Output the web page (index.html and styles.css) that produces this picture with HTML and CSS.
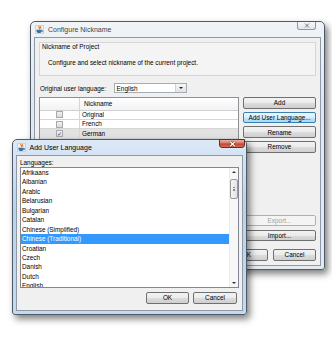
FILE: index.html
```html
<!DOCTYPE html>
<html lang="en">
<head>
    <meta charset="UTF-8">
    <title>Configure Nickname</title>
    <link rel="stylesheet" href="styles.css">
</head>
<body>
    <!-- back window: Configure Nickname (inactive) -->
    <div class="window window-back">
        <div class="titlebar">
            <svg class="app-icon" width="9" height="9" viewBox="0 0 16 16">
                <rect x="0.5" y="0.5" width="15" height="15" rx="1" fill="#eef1f4" stroke="#a9b0b8"/>
                <path d="M7.5 1.5c-2.5 2.2 2.2 3.2 0 6M10 2.5c-1.4 1.3 1.3 2.2 0 4" stroke="#e2660a" fill="none" stroke-width="1.8"/>
                <path d="M2.5 8.5h9.5v1.6c0 2.8-2.2 4.2-4.8 4.2S2.5 12.9 2.5 10.1z" fill="#3f6f9a"/>
                <path d="M12 9.6h1.6v2.2H11.4" stroke="#3f6f9a" fill="none" stroke-width="1.3"/>
            </svg>
            <span class="title">Configure Nickname</span>
            <div class="close close-inactive">
                <svg width="6" height="5" viewBox="0 0 6 5"><path d="M1 0.5l4 4M5 0.5l-4 4" stroke="#6d7782" stroke-width="1"/></svg>
            </div>
        </div>
        <div class="client client-back">
            <div class="group">
                <div class="group-title">Nickname of Project</div>
                <div class="group-desc">Configure and select nickname of the current project.</div>
            </div>

            <div class="lang-row">
                <span>Original user language:</span>
                <div class="combo">
                    <span>English</span>
                    <span class="combo-arrow"></span>
                </div>
            </div>

            <div class="main">
                <div class="table">
                    <div class="tr thead">
                        <div class="td td-check"></div>
                        <div class="td td-name">Nickname</div>
                    </div>
                    <div class="tr">
                        <div class="td td-check"><span class="checkbox"></span></div>
                        <div class="td td-name">Original</div>
                    </div>
                    <div class="tr">
                        <div class="td td-check"><span class="checkbox"></span></div>
                        <div class="td td-name">French</div>
                    </div>
                    <div class="tr tr-selected">
                        <div class="td td-check"><span class="checkbox checked">&#10003;</span></div>
                        <div class="td td-name">German</div>
                    </div>
                </div>

                <div class="side-buttons">
                    <button class="btn">Add</button>
                    <button class="btn btn-hot">Add User Language...</button>
                    <button class="btn">Rename</button>
                    <button class="btn">Remove</button>
                    <button class="btn btn-disabled push-down">Export...</button>
                    <button class="btn">Import...</button>
                </div>
            </div>

            <div class="dialog-buttons">
                <button class="btn btn-dlg">OK</button>
                <button class="btn btn-dlg">Cancel</button>
            </div>
        </div>
    </div>

    <!-- front window: Add User Language (active) -->
    <div class="window window-front">
        <div class="titlebar">
            <svg class="app-icon" width="9" height="9" viewBox="0 0 16 16">
                <rect x="0.5" y="0.5" width="15" height="15" rx="1" fill="#eef1f4" stroke="#a9b0b8"/>
                <path d="M7.5 1.5c-2.5 2.2 2.2 3.2 0 6M10 2.5c-1.4 1.3 1.3 2.2 0 4" stroke="#e2660a" fill="none" stroke-width="1.8"/>
                <path d="M2.5 8.5h9.5v1.6c0 2.8-2.2 4.2-4.8 4.2S2.5 12.9 2.5 10.1z" fill="#3f6f9a"/>
                <path d="M12 9.6h1.6v2.2H11.4" stroke="#3f6f9a" fill="none" stroke-width="1.3"/>
            </svg>
            <span class="title">Add User Language</span>
            <div class="close close-active">
                <svg width="7" height="6" viewBox="0 0 7 6"><path d="M1.2 0.8l4.6 4.4M5.8 0.8l-4.6 4.4" stroke="#5a2219" stroke-width="2.2"/><path d="M1.2 0.8l4.6 4.4M5.8 0.8l-4.6 4.4" stroke="#fff" stroke-width="1.2"/></svg>
            </div>
        </div>
        <div class="client client-front">
            <div class="list-label">Languages:</div>
            <div class="listbox">
                <div class="items">
                    <div class="item">Afrikaans</div>
                    <div class="item">Albanian</div>
                    <div class="item">Arabic</div>
                    <div class="item">Belarusian</div>
                    <div class="item">Bulgarian</div>
                    <div class="item">Catalan</div>
                    <div class="item">Chinese (Simplified)</div>
                    <div class="item item-selected">Chinese (Traditional)</div>
                    <div class="item">Croatian</div>
                    <div class="item">Czech</div>
                    <div class="item">Danish</div>
                    <div class="item">Dutch</div>
                    <div class="item">English</div>
                </div>
                <div class="scrollbar">
                    <span class="arrow arrow-up"></span>
                    <span class="thumb"></span>
                    <span class="arrow arrow-down"></span>
                </div>
            </div>
            <div class="dialog-buttons front-buttons">
                <button class="btn btn-ok">OK</button>
                <button class="btn btn-cancel">Cancel</button>
            </div>
        </div>
    </div>
</body>
</html>
```

FILE: styles.css
```css
* {
    box-sizing: border-box;
}

body {
    margin: 0;
    width: 332px;
    height: 340px;
    position: relative;
    overflow: hidden;
    background: #fff;
    font-family: "Liberation Sans", Arial, sans-serif;
    font-size: 6.4px;
    color: #000;
}

/* windows on the desktop */
.window {
    position: absolute;
    display: flex;
    flex-direction: column;
    border: 1px solid #4f5a66;
    border-radius: 5px 5px 3px 3px;
    padding: 0 3px 3px;
    box-shadow: 3px 4px 7px rgba(0, 0, 0, 0.5);
}

.window-back {
    left: 30px;
    top: 21px;
    width: 295px;
    height: 249px;
    background: linear-gradient(#f1f4f7, #e0e7ee 30%, #e5eaf0);
}

.window-front {
    left: 12px;
    top: 139px;
    width: 235px;
    height: 176px;
    background: linear-gradient(#dce9f7, #bad2ec 40%, #c4daef);
}

.titlebar {
    height: 15px;
    flex-shrink: 0;
    display: flex;
    align-items: center;
    padding-left: 0.5px;
    gap: 4px;
}

.title {
    font-size: 7px;
}

.window-back .title {
    color: #3c434a;
    margin-left: 0.5px;
}

.window-front .title {
    color: #000;
}

.close {
    margin-left: auto;
    align-self: flex-start;
    display: flex;
    justify-content: center;
    align-items: center;
    border-radius: 0 0 3px 3px;
}

.close-inactive {
    width: 19px;
    height: 8px;
    margin-right: 5px;
    border: 1px solid #8e98a3;
    border-top: none;
    background: linear-gradient(#f6f8fa, #e1e7ed);
}

.close-active {
    width: 26px;
    height: 9px;
    margin-top: -1px;
    margin-right: -2px;
    border: 1px solid #6b2c22;
    background: linear-gradient(#eab2a5, #d77763 45%, #c4432c 55%, #d5705a);
}

.client {
    flex: 1;
    display: flex;
    flex-direction: column;
    background: #f0f0f0;
    border: 1px solid #8d99a6;
}

/* Configure Nickname content */
.client-back {
    padding: 4px 4px 4px;
}

.group {
    height: 34px;
    flex-shrink: 0;
    border: 1px solid #d6d6d6;
    background: #f4f4f4;
    padding: 0 2px;
}

.group-title {
    line-height: 8px;
}

.group-desc {
    line-height: 8px;
    margin-top: 8px;
    padding-left: 6px;
}

.lang-row {
    display: flex;
    align-items: center;
    gap: 8px;
    height: 10px;
    margin-top: 7px;
    padding-left: 1px;
}

.combo {
    width: 73px;
    height: 10px;
    margin-left: -0.5px;
    display: flex;
    align-items: center;
    justify-content: space-between;
    padding-left: 2px;
    border: 1px solid #a5acb5;
    background: #fff;
}

.combo-arrow {
    width: 11px;
    height: 8px;
    display: flex;
    justify-content: center;
    align-items: center;
    background: linear-gradient(#f7f7f7, #e3e3e3);
    border-left: 1px solid #d4d4d4;
}

.combo-arrow::after {
    content: "";
    border-left: 2px solid transparent;
    border-right: 2px solid transparent;
    border-top: 2px solid #222;
}

.main {
    flex: 1;
    display: flex;
    gap: 4px;
    margin-top: 4px;
}

.table {
    width: 200px;
    border: 1px solid #8e9094;
    background: #fff;
}

.tr {
    display: flex;
    height: 9.4px;
    border-bottom: 1px solid #d6d6d6;
}

.thead {
    height: 12.6px;
    border-bottom: 1px solid #d0d0d0;
    background: linear-gradient(#fff, #f1f2f4);
}

.td {
    display: flex;
    align-items: center;
    line-height: 8px;
}

.td-check {
    width: 40px;
    justify-content: center;
    border-right: 1px solid #d6d6d6;
}

.td-name {
    flex: 1;
    padding-left: 2px;
}

.thead .td-name {
    padding-left: 4px;
}

.tr-selected {
    background: #e2e2e2;
}

.checkbox {
    width: 7px;
    height: 7px;
    border: 1px solid #a9a9a9;
    background: linear-gradient(#f1f1f1, #dcdcdc);
    display: flex;
    justify-content: center;
    align-items: center;
    font-size: 6px;
    line-height: 6px;
    color: #23449a;
}

.side-buttons {
    width: 73px;
    display: flex;
    flex-direction: column;
    gap: 3.1px;
}

.btn {
    height: 11.6px;
    padding: 0;
    border: 1px solid #707070;
    border-radius: 2px;
    background: linear-gradient(#f2f2f2, #ebebeb 50%, #dddddd 51%, #cfcfcf);
    font-family: inherit;
    font-size: 6.4px;
    color: #000;
}

.btn-hot {
    border-color: #3c7fb1;
    background: linear-gradient(#eaf6fd, #d9f0fc 50%, #bee6fd 51%, #a7d9f5);
}

.btn-disabled {
    border-color: #adb2b5;
    background: #f4f4f4;
    color: #a3a3a3;
}

.push-down {
    margin-top: auto;
}

.side-buttons .btn:last-child {
    margin-bottom: 1px;
}

.dialog-buttons {
    display: flex;
    justify-content: flex-end;
    gap: 5px;
    margin-top: 6.5px;
}

.btn-dlg {
    width: 43px;
    height: 12.4px;
}

/* Add User Language content */
.client-front {
    padding: 3px 3px 0;
}

.list-label {
    line-height: 8px;
}

.listbox {
    height: 121px;
    display: flex;
    border: 1px solid #828790;
    background: #fff;
    overflow: hidden;
}

.items {
    flex: 1;
}

.item {
    height: 9.45px;
    line-height: 9.45px;
    padding-left: 1px;
    white-space: nowrap;
}

.item-selected {
    background: #3399ff;
    color: #fff;
}

.scrollbar {
    width: 9px;
    display: flex;
    flex-direction: column;
    align-items: center;
    background: #f7f7f7;
    border-left: 1px solid #ededed;
    padding: 3px 0 3px;
}

.arrow {
    width: 0;
    height: 0;
    border-left: 2px solid transparent;
    border-right: 2px solid transparent;
}

.arrow-up {
    border-bottom: 2px solid #333;
}

.arrow-down {
    border-top: 2px solid #333;
    margin-top: auto;
}

.thumb {
    width: 8px;
    height: 20px;
    margin-top: 6px;
    border: 1px solid #9a9a9a;
    border-radius: 2px;
    background: linear-gradient(90deg, #f5f5f5, #e2e2e2);
    position: relative;
}

.thumb::after {
    content: "";
    position: absolute;
    left: 2px;
    right: 2px;
    top: 7px;
    height: 4px;
    background: repeating-linear-gradient(#8a8a8a 0 1px, transparent 1px 1.6px);
}

.front-buttons {
    margin-top: 4px;
    padding-right: 2px;
    gap: 4px;
}

.btn-ok {
    width: 43px;
}

.btn-cancel {
    width: 44px;
}
```
